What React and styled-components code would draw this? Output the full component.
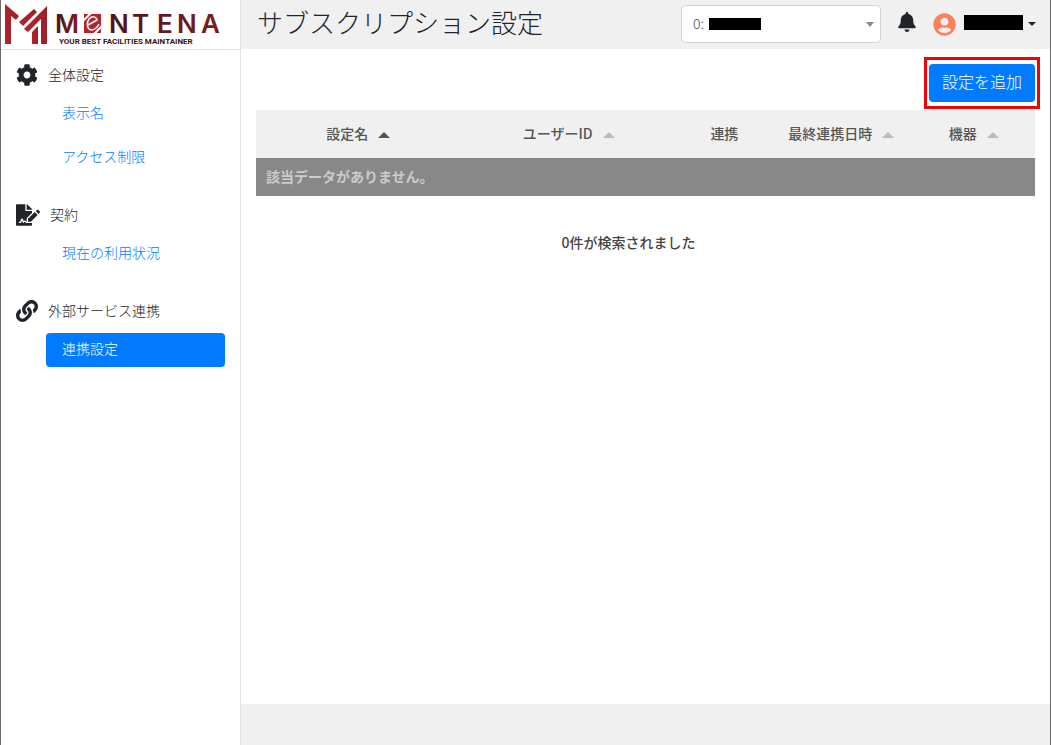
import React from 'react';
import styled, { createGlobalStyle } from 'styled-components';
import { FaCog, FaFileSignature, FaLink, FaBell, FaUserCircle } from 'react-icons/fa';


// ============================================
// STYLED COMPONENTS
// ===========================================

const GlobalStyle = createGlobalStyle`
  *, *::before, *::after {
    box-sizing: border-box;
  }

  body {
    margin: 0;
    font-family: 'Noto Sans CJK JP', 'Noto Sans', sans-serif;
    font-size: 14px;
    font-weight: 300;
    line-height: 20px;
    color: #212529;
    background: white;
  }
`;

const Page = styled.div`
  display: flex;
  min-height: 100vh;
  border-left: 1px solid #6b6b6b;
  border-right: 1px solid #6b6b6b;
`;

const Sidebar = styled.aside`
  flex: 0 0 240px;
  border-right: 1px solid #dee2e6;
`;

const LogoLink = styled.a`
  display: block;
  height: 50px;
  border-bottom: 1px solid #dee2e6;

  svg {
    display: block;
  }
`;

const MenuGroup = styled.section`
  padding: 14px 15px 15px;
`;

const MenuTitle = styled.h2`
  display: flex;
  align-items: center;
  gap: 10px;
  height: 22px;
  margin: 0 0 11px;
  font-size: 14px;
  font-weight: 300;
  line-height: 20px;

  span {
    padding-bottom: 2px;
  }
`;

const MenuList = styled.ul`
  display: flex;
  flex-direction: column;
  gap: 10px;
  margin: 0;
  padding: 0 0 0 30px;
  list-style: none;
`;

const MenuLink = styled.a`
  display: block;
  padding: 5px 16px 9px;
  border-radius: 4px;
  color: ${props => props.$active ? 'white' : '#007bff'};
  background: ${props => props.$active ? '#007bff' : 'transparent'};
  text-decoration: none;
`;

const Main = styled.div`
  flex: 1;
  display: flex;
  flex-direction: column;
  min-width: 0;
`;

const Header = styled.header`
  display: flex;
  align-items: center;
  height: 49px;
  padding: 0 14px 1px 16px;
  background: #f0f0f0;
`;

const Title = styled.h1`
  flex: 1;
  margin: 0;
  padding-bottom: 5px;
  font-size: 26px;
  font-weight: 300;
  line-height: 40px;
`;

const SelectBox = styled.div`
  display: grid;
  align-items: center;
  width: 200px;
  height: 38px;
  margin-right: 16px;

  > * {
    grid-area: 1 / 1;
  }
`;

const Select = styled.select`
  width: 100%;
  height: 100%;
  padding: 0 11px 3px;
  border: 1px solid #ced4da;
  border-radius: 4px;
  appearance: none;
  background: white;
  color: #495057;
  font: inherit;
`;

const SelectCaret = styled.span`
  justify-self: end;
  margin-right: 7px;
  border: 4px solid transparent;
  border-top: 5px solid #888;
  border-bottom: 0;
  pointer-events: none;
`;

const SelectMask = styled.span`
  width: 52px;
  height: 12px;
  margin-left: 28px;
  background: black;
  pointer-events: none;
`;

const IconButton = styled.button`
  display: flex;
  align-items: center;
  margin: 0 16px 4px 0;
  padding: 0;
  border: 0;
  background: none;
  color: #212529;
`;

const UserButton = styled.button`
  display: flex;
  align-items: center;
  gap: 5px;
  padding: 0;
  border: 0;
  background: none;
  color: #ff7f5c;
`;

const UserMask = styled.span`
  width: 59px;
  height: 15px;
  margin: 0 0 4px 3px;
  background: black;
`;

const UserCaret = styled.span`
  border: 4px solid transparent;
  border-top-color: #212529;
  border-bottom: 0;
`;

const Content = styled.main`
  flex: 1;
  padding: 8px 15px 0;
`;

const Actions = styled.div`
  display: flex;
  justify-content: flex-end;
  margin: 0 -5px 1px 0;
`;

const Highlight = styled.div`
  padding: 4px 2px;
  border: 3px solid #ee0404;
`;

const AddButton = styled.button`
  display: block;
  height: 38px;
  padding: 0 13px 4px;
  border: 0;
  border-radius: 4px;
  background: #007bff;
  color: white;
  font: inherit;
  font-size: 16px;
`;

const Table = styled.table`
  width: 100%;
  border-collapse: collapse;
  table-layout: fixed;
`;

const HeadCell = styled.th`
  width: ${props => props.$width};
  height: 48px;
  padding: 0 0 3px 2px;
  background: #f0f0f0;
  color: #555;
  font-weight: 500;
  text-align: center;
`;

const SortArrow = styled.span`
  display: inline-block;
  margin-left: 10px;
  border: 6px solid transparent;
  border-top: 0;
  border-bottom-color: ${props => props.$active ? '#555' : '#bbb'};
  vertical-align: 1px;
`;

const EmptyCell = styled.td`
  height: 38px;
  padding: 0 10px 3px;
  background: #888;
  color: #ccc;
  font-weight: 700;
`;

const ResultCount = styled.p`
  margin: 36px 34px 0 0;
  color: #444;
  font-weight: 500;
  text-align: center;
`;

const Footer = styled.footer`
  height: 41px;
  background: #f0f0f0;
`;

// ============================================
// DATA
// ===========================================

const menu = [
  {title: '全体設定', icon: FaCog, items: ['表示名', 'アクセス制限']},
  {title: '契約', icon: FaFileSignature, iconSize: 24, items: ['現在の利用状況']},
  {title: '外部サービス連携', icon: FaLink, items: ['連携設定']}
];

const columns = [
  {name: '設定名', width: '26%', sortable: true},
  {name: 'ユーザーID', width: '28%', sortable: true},
  {name: '連携', width: '12%', sortable: false},
  {name: '最終連携日時', width: '18%', sortable: true},
  {name: '機器', width: '16%', sortable: true}
];

// ============================================
// REACT
// ===========================================

const Logo = () => (
  <svg width='224' height='49' viewBox='0 0 224 49' role='img' aria-label='MONTENA'>
    <defs>
      <linearGradient id='logoRed' x1='0' x2='1'>
        <stop offset='0' stopColor='#b3242c'/>
        <stop offset='1' stopColor='#9e1f27'/>
      </linearGradient>
      <linearGradient id='logoDark' x1='0' x2='1'>
        <stop offset='0' stopColor='#4a1519'/>
        <stop offset='1' stopColor='#7d1c22'/>
      </linearGradient>
    </defs>
    <g fill='url(#logoRed)'>
      <path d='M4 4 L18 16 L15 20 L10 16 V44 H4 Z'/>
      <path d='M18 22 L33 9 L36 12 L22 26 Z'/>
      <path d='M23 29 L46 6 V44 H40 V19 L27 32 Z'/>
      <path d='M31 32 L37 26 V44 H31 Z'/>
    </g>
    <path d='M83 14 H100 V33 H83 Z' fill='#b3242c'/>
    <g fill='none' stroke='white' strokeWidth='2'>
      <path d='M82 21 L90 13 M93 34 L101 26'/>
      <path d='M87 25 L96 20 C95 16 91 16 88 19 C85 23 86 29 90 30 C93 30 96 28 98 24' strokeWidth='1.5'/>
    </g>
    <g fill='url(#logoDark)' fontFamily='Inter, sans-serif' fontWeight='600' fontSize='26'>
      <text x='54' y='33'>M</text>
      <text x='108 131 156 176 200' y='33'>NTENA</text>
    </g>
    <text x='58' y='44' fill='#3a1214' fontFamily='Roboto, sans-serif' fontWeight='700' fontSize='8'>YOUR BEST FACILITIES MAINTAINER</text>
  </svg>
);

class App extends React.Component {
  constructor(props) {
    super(props);

    this.state = {
      selectedItem: '連携設定',
      sortColumn: '設定名'
    };

    this.handleItemClick = this.handleItemClick.bind(this);
  }

  handleItemClick(e, item) {
    e.preventDefault();
    this.setState({selectedItem: item});
  }

  render() {
    return (
      <Page>
        <GlobalStyle/>
        <Sidebar>
          <LogoLink href='#'><Logo/></LogoLink>
          <nav>
            {menu.map(({title, icon: Icon, iconSize, items}) => (
              <MenuGroup key={title}>
                <MenuTitle><Icon size={iconSize || 22}/><span>{title}</span></MenuTitle>
                <MenuList>
                  {items.map(item => (
                    <li key={item}>
                      <MenuLink href='#' $active={this.state.selectedItem === item} onClick={e => this.handleItemClick(e, item)}>{item}</MenuLink>
                    </li>
                  ))}
                </MenuList>
              </MenuGroup>
            ))}
          </nav>
        </Sidebar>
        <Main>
          <Header>
            <Title>サブスクリプション設定</Title>
            <SelectBox>
              <Select aria-label='契約先'>
                <option>0:</option>
              </Select>
              <SelectMask/>
              <SelectCaret/>
            </SelectBox>
            <IconButton aria-label='通知'><FaBell size={20}/></IconButton>
            <UserButton aria-label='ユーザーメニュー'>
              <FaUserCircle size={23}/>
              <UserMask/>
              <UserCaret/>
            </UserButton>
          </Header>
          <Content>
            <Actions>
              <Highlight>
                <AddButton>設定を追加</AddButton>
              </Highlight>
            </Actions>
            <Table>
              <thead>
                <tr>
                  {columns.map(({name, width, sortable}) => (
                    <HeadCell key={name} $width={width}>
                      {name}
                      {sortable && <SortArrow $active={this.state.sortColumn === name}/>}
                    </HeadCell>
                  ))}
                </tr>
              </thead>
              <tbody>
                <tr>
                  <EmptyCell colSpan={columns.length}>該当データがありません。</EmptyCell>
                </tr>
              </tbody>
            </Table>
            <ResultCount>0件が検索されました</ResultCount>
          </Content>
          <Footer/>
        </Main>
      </Page>
    );
  }
}

export default App;
